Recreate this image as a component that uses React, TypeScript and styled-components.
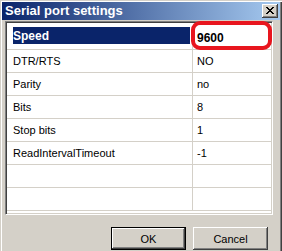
import React from 'react';
import styled, { createGlobalStyle } from 'styled-components';

const Global = createGlobalStyle`
  html, body { margin: 0; padding: 0; background: #d4d0c8; }
  body { font-family: "Liberation Sans", Arial, sans-serif; }
`;

const Window = styled.div`
  position: relative;
  width: 282px;
  height: 251px;
  box-sizing: border-box;
  padding: 2px 2px 0 2px;
  background: #d4d0c8;
  box-shadow: inset 1px 1px 0 #d4d0c8, inset 2px 2px 0 #ffffff,
    inset -1px 0 0 #404040, inset -2px 0 0 #808080;
  display: flex;
  flex-direction: column;
  overflow: hidden;
`;

const TitleBar = styled.div`
  height: 18px;
  flex: none;
  background: linear-gradient(to right, #0a246a, #a6caf0);
  display: flex;
  align-items: center;
  justify-content: space-between;
  padding: 0 2px 0 3px;
`;

const Title = styled.span`
  color: #ffffff;
  font-weight: bold;
  font-size: 13px;
  line-height: 18px;
  white-space: nowrap;
`;

const CloseButton = styled.div`
  width: 16px;
  height: 14px;
  box-sizing: border-box;
  background: #d4d0c8;
  box-shadow: inset -1px -1px 0 #404040, inset 1px 1px 0 #ffffff,
    inset -2px -2px 0 #808080, inset 2px 2px 0 #d4d0c8;
  display: flex;
  align-items: center;
  justify-content: center;
  padding: 0 1px 1px 0;
`;

const Body = styled.div`
  padding: 1px 7px 0 3px;
  display: flex;
  flex-direction: column;
`;

const Frame = styled.div`
  height: 194px;
  box-sizing: border-box;
  background: #ffffff;
  border: 1px solid;
  border-color: #808080 #ffffff #ffffff #808080;
  box-shadow: inset 1px 1px 0 #404040, inset -1px -1px 0 #d4d0c8;
  padding: 5px 1px 0 1px;
  display: flex;
  flex-direction: column;
`;

const Row = styled.div`
  display: grid;
  grid-template-columns: 186px 1fr;
  height: 23px;
  box-sizing: border-box;
  border-bottom: 1px solid #d4d0c8;
`;

const NameCell = styled.div<{ $selected?: boolean }>`
  border-right: 1px solid #d4d0c8;
  padding: 0 2px 0 6px;
  display: flex;
  align-items: ${(p) => (p.$selected ? 'flex-start' : 'center')};
  font-size: 11px;
  color: #000;
  white-space: nowrap;
`;

const Highlight = styled.span`
  flex: 1;
  height: 17px;
  background: #0a246a;
  color: #ffffff;
  font-weight: bold;
  font-size: 12px;
  display: flex;
  align-items: center;
`;

const ValueCell = styled.div<{ $bold?: boolean }>`
  padding-left: 4px;
  display: flex;
  align-items: center;
  font-size: ${(p) => (p.$bold ? '12px' : '11px')};
  font-weight: ${(p) => (p.$bold ? 'bold' : 'normal')};
  color: #000;
  white-space: nowrap;
`;

const ButtonRow = styled.div`
  margin-top: 12px;
  display: flex;
  justify-content: flex-end;
  gap: 7px;
  padding-right: 5px;
`;

const Button = styled.button<{ $default?: boolean }>`
  width: 75px;
  height: 23px;
  box-sizing: border-box;
  padding: 0;
  margin: 0;
  background: #d4d0c8;
  font-family: "Liberation Sans", Arial, sans-serif;
  font-size: 11px;
  color: #000;
  border: ${(p) => (p.$default ? '1px solid #000000' : 'none')};
  box-shadow: inset -1px -1px 0 #404040, inset 1px 1px 0 #ffffff,
    inset -2px -2px 0 #808080, inset 2px 2px 0 #d4d0c8;
  outline: none;
`;

const Ring = styled.div`
  position: absolute;
  left: 191px;
  top: 21px;
  width: 81px;
  height: 29px;
  box-sizing: border-box;
  border: 4px solid #e8161e;
  border-radius: 9px;
  pointer-events: none;
`;

const rows: { name: string; value: string }[] = [
  { name: 'DTR/RTS', value: 'NO' },
  { name: 'Parity', value: 'no' },
  { name: 'Bits', value: '8' },
  { name: 'Stop bits', value: '1' },
  { name: 'ReadIntervalTimeout', value: '-1' },
  { name: '', value: '' },
  { name: '', value: '' },
];

export default function App() {
  return (
    <>
      <Global />
      <Window>
        <TitleBar>
          <Title>Serial port settings</Title>
          <CloseButton>
            <svg width="8" height="7" viewBox="0 0 8 7" shapeRendering="crispEdges">
              <path d="M0 0h2v1h-2zM6 0h2v1h-2zM1 1h2v1h-2zM5 1h2v1h-2zM2 2h4v1h-4zM3 3h2v1h-2zM2 4h4v1h-4zM1 5h2v1h-2zM5 5h2v1h-2zM0 6h2v1h-2zM6 6h2v1h-2z" fill="#000" />
            </svg>
          </CloseButton>
        </TitleBar>
        <Body>
          <Frame>
            <Row>
              <NameCell $selected>
                <Highlight>Speed</Highlight>
              </NameCell>
              <ValueCell $bold>9600</ValueCell>
            </Row>
            {rows.map((r, i) => (
              <Row key={i}>
                <NameCell>{r.name}</NameCell>
                <ValueCell>{r.value}</ValueCell>
              </Row>
            ))}
          </Frame>
          <ButtonRow>
            <Button $default>OK</Button>
            <Button>Cancel</Button>
          </ButtonRow>
        </Body>
        <Ring />
      </Window>
    </>
  );
}
